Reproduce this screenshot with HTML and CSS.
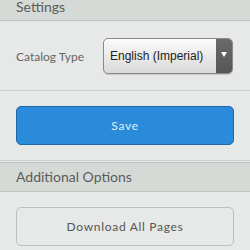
FILE: index.html
```html
<!DOCTYPE html>
<html>

<head>
    <meta charset="UTF-8" />
    <meta name="viewport" content="width=device-width" />
    <title>Settings</title>
    <link rel="stylesheet" href="styles.css">
</head>

<body>
    <h2 class="section-title first">Settings</h2>

    <div class="row field">
        <label for="catalog">Catalog Type</label>
        <div class="select" id="catalog">
            <span class="select-value">English (Imperial)</span>
            <span class="select-arrow"></span>
        </div>
    </div>

    <div class="row">
        <button class="btn btn-primary">Save</button>
    </div>

    <h2 class="section-title">Additional Options</h2>

    <div class="row last">
        <button class="btn btn-default">Download All Pages</button>
    </div>
</body>

</html>
```

FILE: styles.css
```css
body {
    margin: 0;
    background: #e6e9e7;
    font-family: "Lato", sans-serif;
    color: #555;
    overflow: hidden;
}

.section-title {
    margin: 0;
    height: 28px;
    padding-left: 16px;
    background: #d6dad7;
    border-top: 1px solid #bcc4c0;
    border-bottom: 1px solid #bcc4c0;
    font-size: 14px;
    font-weight: normal;
    line-height: 28px;
    color: #5a5d5b;
}

.section-title.first {
    height: 27px;
    line-height: 27px;
    margin-top: -7px;
    border-top: none;
}

.row {
    padding: 15px 16px 15px;
    border-bottom: 1px solid #c9cfcb;
    margin-bottom: 1px;
}

.row.last {
    border-bottom: none;
}

.field {
    display: flex;
    align-items: center;
    padding-top: 17px;
    padding-bottom: 16px;
    margin-bottom: 0;
}

.field label {
    width: 87px;
    flex-shrink: 0;
    font-size: 12px;
    color: #666;
}

.select {
    display: flex;
    flex-shrink: 0;
    width: 130px;
    height: 36px;
    box-sizing: border-box;
    border: 1px solid #8a8a8a;
    border-radius: 5px;
    overflow: hidden;
    background: linear-gradient(#fbfbfb, #d9d9d9);
    box-shadow: 0 1px 1px rgba(0, 0, 0, 0.15);
}

.select-value {
    flex: 1;
    padding-left: 6px;
    font-family: "Liberation Sans", sans-serif;
    font-size: 12px;
    line-height: 34px;
    color: #222;
}

.select-arrow {
    position: relative;
    width: 16px;
    background: linear-gradient(#6a6a6a, #565656);
}

.select-arrow::after {
    content: "";
    position: absolute;
    top: 13px;
    left: 5px;
    border-left: 3px solid transparent;
    border-right: 3px solid transparent;
    border-top: 5px solid #fff;
}

.btn {
    display: block;
    width: 100%;
    height: 39px;
    border-radius: 5px;
    font-family: "Lato", sans-serif;
    font-size: 12px;
    letter-spacing: 0.7px;
    cursor: pointer;
}

.btn-primary {
    background: #2a8bdb;
    border: 1px solid #2067a8;
    color: #e4eef8;
}

.btn-default {
    background: #e6e9e7;
    border: 1px solid #b6c2bd;
    color: #555;
}
```
